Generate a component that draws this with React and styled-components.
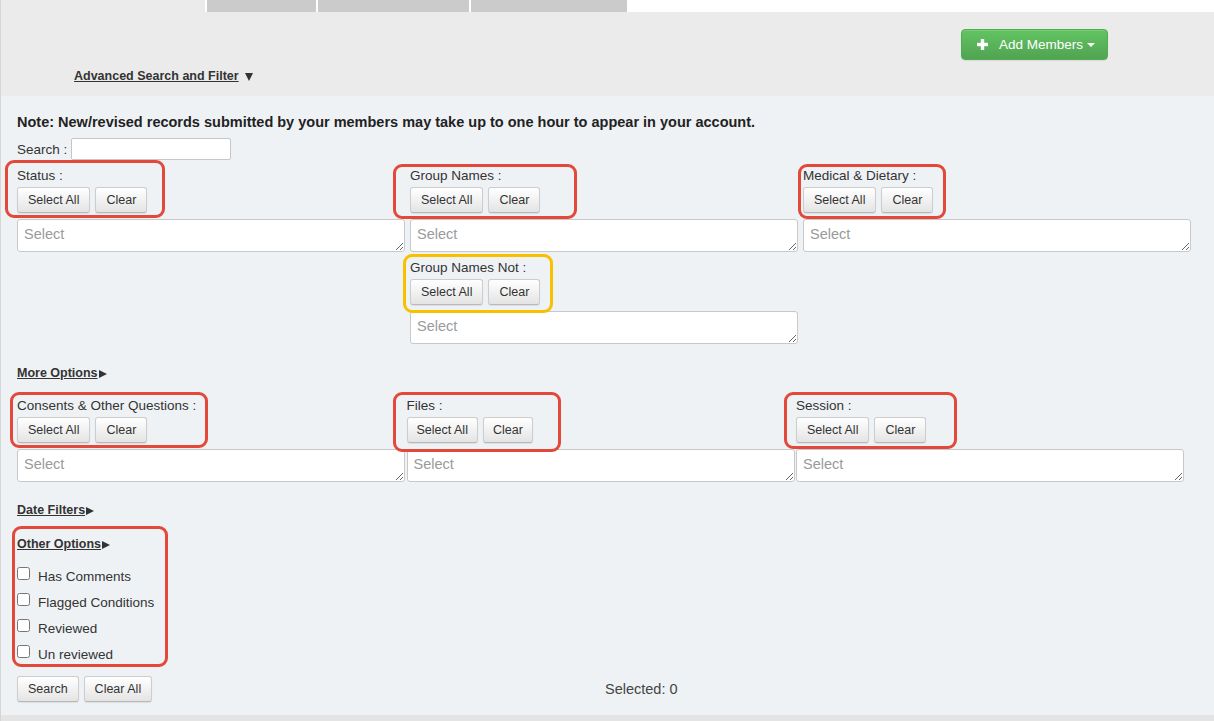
import React from "react";
import styled, { createGlobalStyle } from "styled-components";

const GlobalStyle = createGlobalStyle`
  body {
    margin: 0;
    background: #fff;
    font-family: "Liberation Sans", Arial, sans-serif;
    color: #333;
  }
`;

const Page = styled.div`
  width: 1214px;
  height: 721px;
  overflow: hidden;
  border-left: 1px solid #d6d6d6;
  box-sizing: border-box;
`;

const TabStrip = styled.div`
  display: flex;
  gap: 2px;
  height: 12px;
  background: #fff;
`;

const Tab = styled.div`
  width: ${(p) => p.$w}px;
  background: ${(p) => (p.$active ? "#ebebeb" : "#cbcbcb")};
`;

const Header = styled.div`
  height: 84px;
  box-sizing: border-box;
  padding-top: 17px;
  background: #ebebeb;
`;

const HeaderTop = styled.div`
  display: flex;
  justify-content: flex-end;
  padding-right: 106px;
`;

const AddButton = styled.button`
  display: flex;
  align-items: center;
  width: 147px;
  height: 31px;
  padding: 0 0 0 15px;
  border: 1px solid #4cae4c;
  border-radius: 4px;
  background: linear-gradient(#62c462, #51a351);
  box-shadow: inset 0 1px 0 rgba(255, 255, 255, 0.15), 0 1px 1px rgba(0, 0, 0, 0.08);
  color: #fff;
  font-family: "Liberation Sans", Arial, sans-serif;
  font-size: 13.5px;
  cursor: pointer;
  svg {
    margin-right: 11px;
  }
`;

const WhiteCaret = styled.span`
  margin-left: 4px;
  margin-top: 1px;
  border-top: 4px solid #fff;
  border-left: 4px solid transparent;
  border-right: 4px solid transparent;
`;

const AdvancedRow = styled.div`
  margin-top: 9px;
  padding-left: 73px;
  display: flex;
  align-items: center;
`;

const ToggleLink = styled.a`
  display: inline-flex;
  align-items: center;
  font-size: 12.5px;
  line-height: 15px;
  font-weight: bold;
  color: #333;
  text-decoration: underline;
`;

const Arrow = styled.span`
  display: inline-block;
  margin-left: ${(p) => (p.$down ? 6 : 1)}px;
  ${(p) =>
    p.$down
      ? `border-top: 8px solid #333; border-left: 4px solid transparent; border-right: 4px solid transparent;`
      : `border-left: 8px solid #333; border-top: 4px solid transparent; border-bottom: 4px solid transparent;`}
`;

const Panel = styled.div`
  height: 619px;
  box-sizing: border-box;
  padding: 17px 0 13px 16px;
  background: #eff2f5;
`;

const Note = styled.div`
  font-size: 14.5px;
  line-height: 18px;
  font-weight: bold;
  color: #222;
`;

const SearchRow = styled.div`
  margin-top: 7px;
  display: flex;
  align-items: center;
  gap: 4px;
  font-size: 13.5px;
  color: #333;
`;

const SearchInput = styled.input`
  width: 160px;
  height: 22px;
  box-sizing: border-box;
  border: 1px solid #c6c6c6;
  border-radius: 2px;
  background: #fff;
`;

const Columns = styled.div`
  display: grid;
  grid-template-columns: 388px 388px 388px;
  column-gap: ${(p) => p.$gap}px;
  margin-top: ${(p) => p.$top}px;
  align-items: start;
`;

const Stack = styled.div`
  display: flex;
  flex-direction: column;
  gap: 8px;
`;

const Group = styled.div`
  display: flex;
  flex-direction: column;
`;

const Marked = styled.div`
  position: relative;
  align-self: flex-start;
  &::after {
    content: "";
    position: absolute;
    left: -${(p) => p.$l}px;
    top: -${(p) => p.$t}px;
    width: ${(p) => p.$w}px;
    bottom: -${(p) => p.$b}px;
    border: 3px solid ${(p) => p.$color || "#e2493a"};
    border-radius: 9px;
    box-sizing: border-box;
    pointer-events: none;
  }
`;

const Label = styled.div`
  font-size: 13.5px;
  line-height: 16px;
  color: #333;
`;

const Buttons = styled.div`
  display: flex;
  gap: 5px;
  margin-top: ${(p) => (p.$flat ? 0 : 3)}px;
`;

const Btn = styled.button`
  height: 26px;
  padding: 0 ${(p) => p.$pad || 10}px;
  border: 1px solid #cdcdcd;
  border-bottom-color: #b8b8b8;
  border-radius: 3px;
  background: linear-gradient(#ffffff, #e4e4e4);
  box-shadow: 0 1px 1px rgba(0, 0, 0, 0.08);
  font-family: "Liberation Sans", Arial, sans-serif;
  font-size: 12.5px;
  color: #333;
  cursor: pointer;
`;

const SelectBox = styled.textarea`
  margin-top: 6px;
  width: 100%;
  height: 33px;
  box-sizing: border-box;
  padding: 6px 6px;
  border: 1px solid #c9c9c9;
  border-radius: 3px;
  background: #fff;
  font-family: "Liberation Sans", Arial, sans-serif;
  font-size: 14.5px;
  line-height: 16px;
  color: #333;
  &::placeholder {
    color: #9a9a9a;
  }
`;

const Toggle = styled.div`
  display: flex;
  margin-top: ${(p) => p.$top}px;
`;

const CheckList = styled.div`
  margin-top: 11px;
  display: flex;
  flex-direction: column;
`;

const CheckRow = styled.label`
  display: flex;
  align-items: center;
  height: 26px;
  font-size: 13.5px;
  color: #333;
  input {
    width: 13px;
    height: 13px;
    margin: 0 8px 6px 0;
  }
`;

const BottomRow = styled.div`
  margin-top: 9px;
  display: grid;
  grid-template-columns: 588px 1fr;
  align-items: center;
`;

const Selected = styled.div`
  font-size: 14.5px;
  color: #444;
`;

const FooterBar = styled.div`
  height: 6px;
  background: #e4e4e4;
`;

const PlusIcon = () => (
  <svg width="11" height="11" viewBox="0 0 11 11">
    <rect x="3.8" y="0" width="3.4" height="11" fill="#fff" />
    <rect x="0" y="3.8" width="11" height="3.4" fill="#fff" />
  </svg>
);

const FilterGroup = ({ label, mark, pad }) => (
  <Group>
    <Marked {...mark}>
      <Label>{label}</Label>
      <Buttons>
        <Btn $pad={pad}>Select All</Btn>
        <Btn $pad={pad}>Clear</Btn>
      </Buttons>
    </Marked>
    <SelectBox placeholder="Select" />
  </Group>
);

const checks = ["Has Comments", "Flagged Conditions", "Reviewed", "Un reviewed"];

export default function App() {
  return (
    <>
      <GlobalStyle />
      <Page>
        <TabStrip>
          <Tab $active $w={204} />
          <Tab $w={109} />
          <Tab $w={151} />
          <Tab $w={156} />
        </TabStrip>
        <Header>
          <HeaderTop>
            <AddButton>
              <PlusIcon />
              Add Members
              <WhiteCaret />
            </AddButton>
          </HeaderTop>
          <AdvancedRow>
            <ToggleLink>
              Advanced Search and Filter
              <Arrow $down />
            </ToggleLink>
          </AdvancedRow>
        </Header>
        <Panel>
          <Note>
            Note: New/revised records submitted by your members may take up to
            one hour to appear in your account.
          </Note>
          <SearchRow>
            Search :
            <SearchInput />
          </SearchRow>

          <Columns $gap={5} $top={8}>
            <FilterGroup label="Status :" mark={{ $l: 12, $t: 8, $w: 160, $b: 5 }} />
            <Stack>
              <FilterGroup label="Group Names :" mark={{ $l: 17, $t: 4, $w: 184, $b: 6 }} />
              <FilterGroup
                label="Group Names Not :"
                mark={{ $l: 7, $t: 6, $w: 150, $b: 8, $color: "#f7c100" }}
              />
            </Stack>
            <FilterGroup label="Medical & Dietary :" mark={{ $l: 5, $t: 4, $w: 148, $b: 6 }} />
          </Columns>

          <Toggle $top={22}>
            <ToggleLink>
              More Options
              <Arrow />
            </ToggleLink>
          </Toggle>

          <Columns $gap={1.5} $top={17}>
            <FilterGroup
              label="Consents & Other Questions :"
              mark={{ $l: 7, $t: 6, $w: 198, $b: 5 }}
            />
            <FilterGroup label="Files :" pad={9} mark={{ $l: 14, $t: 6, $w: 168, $b: 9 }} />
            <FilterGroup label="Session :" mark={{ $l: 12, $t: 6, $w: 173, $b: 6 }} />
          </Columns>

          <Toggle $top={21}>
            <ToggleLink>
              Date Filters
              <Arrow />
            </ToggleLink>
          </Toggle>

          <Toggle $top={16}>
            <Marked $l={5} $t={8} $w={156} $b={0}>
              <ToggleLink>
                Other Options
                <Arrow />
              </ToggleLink>
              <CheckList>
                {checks.map((c) => (
                  <CheckRow key={c}>
                    <input type="checkbox" />
                    {c}
                  </CheckRow>
                ))}
              </CheckList>
            </Marked>
          </Toggle>

          <BottomRow>
            <Buttons $flat>
              <Btn>Search</Btn>
              <Btn>Clear All</Btn>
            </Buttons>
            <Selected>Selected: 0</Selected>
          </BottomRow>
        </Panel>
        <FooterBar />
      </Page>
    </>
  );
}
